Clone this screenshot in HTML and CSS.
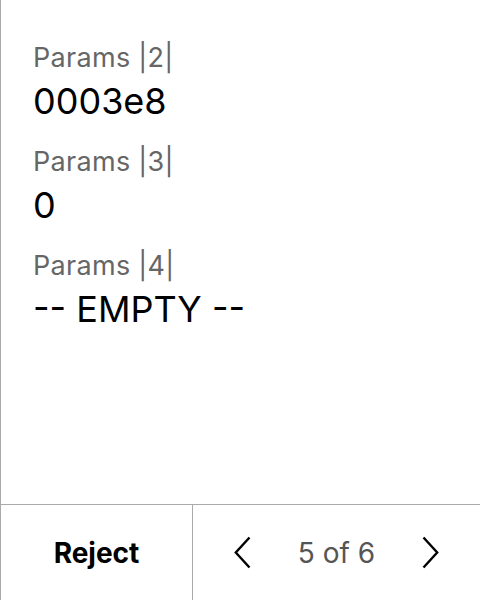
FILE: index.html
```html
<!DOCTYPE html>
<html>
<head>
<meta charset="utf-8">
<link rel="stylesheet" href="styles.css">
</head>
<body>
<div class="screen">
  <div class="content">
    <div class="field">
      <div class="label">Params |2|</div>
      <div class="value">0003e8</div>
    </div>
    <div class="field">
      <div class="label">Params |3|</div>
      <div class="value">0</div>
    </div>
    <div class="field">
      <div class="label">Params |4|</div>
      <div class="value">-- EMPTY --</div>
    </div>
  </div>
  <div class="footer">
    <div class="reject">Reject</div>
    <div class="pager">
      <svg class="chev" width="17" height="33" viewBox="0 0 17 33"><path d="M15.5 1.5 L1.8 16.5 L15.5 31.5" fill="none" stroke="#000" stroke-width="2.4"/></svg>
      <span class="count">5 of 6</span>
      <svg class="chev" width="17" height="33" viewBox="0 0 17 33"><path d="M1.5 1.5 L15.2 16.5 L1.5 31.5" fill="none" stroke="#000" stroke-width="2.4"/></svg>
    </div>
  </div>
</div>
</body>
</html>
```
FILE: styles.css
```css
html, body {
  margin: 0;
  padding: 0;
  background: #fff;
}
body {
  font-family: Inter, "Noto Sans", sans-serif;
  width: 480px;
  height: 600px;
  overflow: hidden;
}
.screen {
  height: 600px;
  border-left: 1px solid #aaa;
  box-sizing: border-box;
  display: flex;
  flex-direction: column;
}
.content {
  flex: 1;
  padding: 40px 0 0 32px;
  display: flex;
  flex-direction: column;
  gap: 18px;
}
.field {
  display: flex;
  flex-direction: column;
}
.label {
  font-size: 27px;
  line-height: 36px;
  color: #666;
  letter-spacing: 0.3px;
}
.value {
  font-size: 36px;
  line-height: 50px;
  color: #000;
}
.footer {
  height: 96px;
  box-sizing: border-box;
  border-top: 1px solid #aaa;
  display: flex;
}
.reject {
  width: 191px;
  border-right: 1px solid #aaa;
  display: flex;
  align-items: center;
  justify-content: center;
  font-size: 28px;
  font-weight: 700;
  color: #000;
}
.pager {
  flex: 1;
  display: flex;
  align-items: center;
  justify-content: center;
  gap: 47px;
}
.count {
  font-size: 28px;
  color: #555;
}
.chev {
  display: block;
}
```
